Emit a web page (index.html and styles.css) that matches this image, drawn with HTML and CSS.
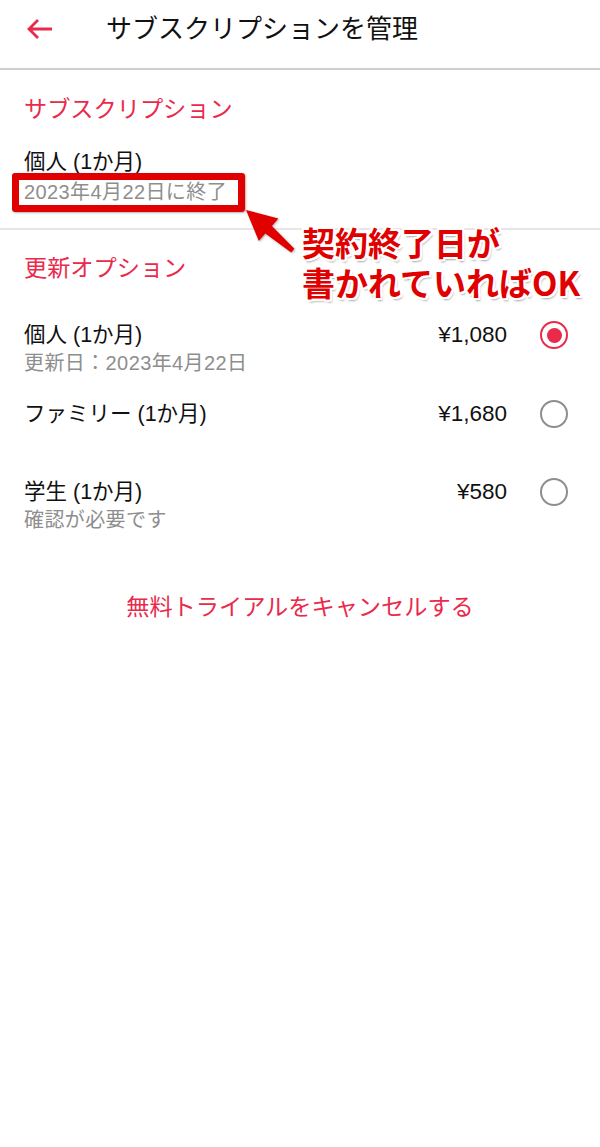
FILE: index.html
```html
<!DOCTYPE html>
<html lang="ja">
<head>
	<meta charset="UTF-8">
	<title>サブスクリプションを管理</title>
	<link rel="stylesheet" href="styles.css">
</head>
<body>
<div class="page">
	<div class="top">
		<svg class="back" width="28" height="22" viewBox="0 0 28 22">
			<path d="M26 11H3M12 2L3 11l9 9" fill="none" stroke="#ea2a4b" stroke-width="2.8"/>
		</svg>
		<h1 class="top-tit">サブスクリプションを管理</h1>
	</div>

	<!-- 現在のサブスクリプション -->
	<div class="sec sec-now">
		<h2 class="sec-tit">サブスクリプション</h2>
		<p class="name">個人 (1か月)</p>
		<p class="sub">2023年4月22日に終了</p>
	</div>

	<!-- 更新オプション -->
	<div class="sec sec-opt">
		<h2 class="sec-tit">更新オプション</h2>
		<ul class="opt">
			<li>
				<div class="opt-l">
					<p class="name">個人 (1か月)</p>
					<p class="sub">更新日：2023年4月22日</p>
				</div>
				<span class="price">¥1,080</span>
				<span class="radio on"></span>
			</li>
			<li>
				<div class="opt-l">
					<p class="name">ファミリー (1か月)</p>
				</div>
				<span class="price">¥1,680</span>
				<span class="radio"></span>
			</li>
			<li>
				<div class="opt-l">
					<p class="name">学生 (1か月)</p>
					<p class="sub">確認が必要です</p>
				</div>
				<span class="price">¥580</span>
				<span class="radio"></span>
			</li>
		</ul>
		<p class="cancel">無料トライアルをキャンセルする</p>
	</div>

	<!-- 注釈 -->
	<div class="mark"></div>
	<svg class="pointer" width="600" height="300" viewBox="0 0 600 300">
		<polygon points="246,210 278.4,218.4 271.9,225.9 294.4,248.8 291.2,252.6 265.3,233.5 258.8,241" fill="#e00000"/>
	</svg>
	<div class="note">
		<p>契約終了日が</p>
		<p>書かれていればOK</p>
	</div>
</div>
</body>
</html>
```

FILE: styles.css
```css
body,h1,h2,p,ul{
	margin: 0;
	padding: 0;
}
ul{
	list-style: none;
}
body{
	background: #fff;
	color: #111;
	font-family: "Liberation Sans", "Noto Sans CJK JP", sans-serif;
}
.page{
	position: relative;
	width: 600px;
	height: 1147px;
	overflow: hidden;
}
.top{
	display: flex;
	align-items: center;
	height: 58px;
	padding-bottom: 10px;
	border-bottom: 2px solid #cfcfcf;
}
.back{
	margin-left: 26px;
}
.top-tit{
	margin-left: 52px;
	font-size: 26px;
	font-weight: normal;
	line-height: 32px;
	color: #111;
}
.sec{
	padding: 0 24px;
}
.sec-now{
	padding-top: 24px;
	padding-bottom: 24px;
	border-bottom: 2px solid #e6e6e6;
}
.sec-opt{
	padding-top: 23px;
}
.sec-tit{
	font-size: 23.2px;
	font-weight: normal;
	line-height: 30px;
	color: #ea2a4b;
}
.name{
	font-size: 21.5px;
	line-height: 28px;
	color: #111;
}
.sub{
	font-size: 20px;
	line-height: 24px;
	letter-spacing: 0.4px;
	color: #8e8e8e;
}
.sec-now .name{
	margin-top: 24px;
}
.sec-now .sub{
	margin-top: 4px;
}
.sec-opt .sub{
	margin-top: 2px;
}
.opt{
	margin-top: 38px;
}
.opt li{
	display: flex;
	align-items: flex-start;
	height: 78.5px;
	padding-right: 8px;
}
.opt-l{
	flex: 1;
}
.price{
	font-size: 22.5px;
	line-height: 28px;
	color: #111;
}
.radio{
	box-sizing: border-box;
	width: 28px;
	height: 28px;
	margin-left: 33px;
	border: 2.6px solid #8e8e8e;
	border-radius: 50%;
	display: flex;
	align-items: center;
	justify-content: center;
}
.radio.on{
	border-color: #ea2a4b;
}
.radio.on::after{
	content: "";
	width: 15px;
	height: 15px;
	border-radius: 50%;
	background: #ea2a4b;
}
.cancel{
	margin-top: 35px;
	text-align: center;
	font-size: 23.2px;
	line-height: 30px;
	color: #ea2a4b;
}
.mark{
	position: absolute;
	left: 12px;
	top: 173px;
	width: 233px;
	height: 39px;
	box-sizing: border-box;
	border: 7px solid #e00000;
	border-radius: 3px;
	box-shadow: 1px 1px 2px rgba(0,0,0,0.3);
}
.pointer{
	position: absolute;
	left: 0;
	top: 0;
	filter: drop-shadow(1px 1px 1px rgba(0,0,0,0.3));
}
.note{
	position: absolute;
	left: 302px;
	top: 222px;
	font-family: "Noto Sans CJK JP", sans-serif;
	font-size: 33px;
	font-weight: bold;
	line-height: 40px;
	color: #e00000;
	text-shadow: 2px 0 0 #fff, -2px 0 0 #fff, 0 2px 0 #fff, 0 -2px 0 #fff, 2px 2px 0 #fff, -2px -2px 0 #fff, 2px -2px 0 #fff, -2px 2px 0 #fff, 2px 3px 2px rgba(0,0,0,0.35);
}
```
